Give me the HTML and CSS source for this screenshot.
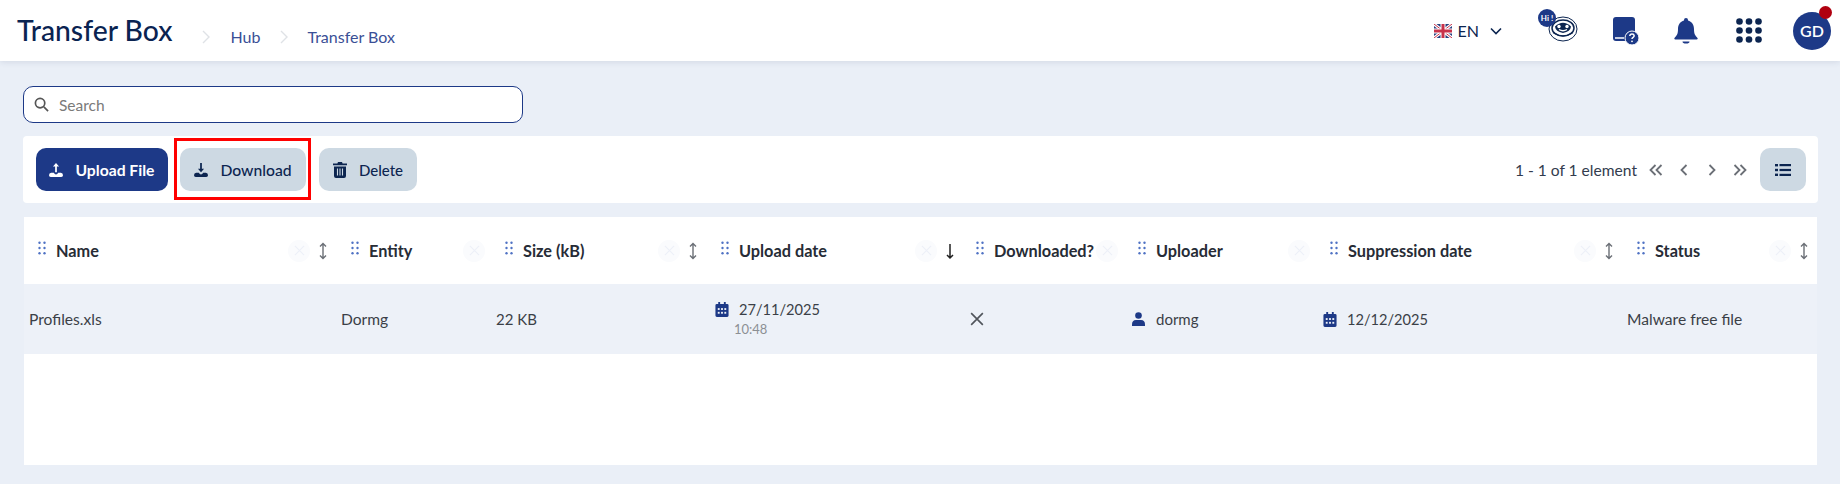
FILE: index.html
```html
<!DOCTYPE html>
<html lang="en">
<head>
<meta charset="utf-8">
<title>Transfer Box</title>
<link rel="stylesheet" href="styles.css">
</head>
<body>
<svg class="defs" width="0" height="0" aria-hidden="true">
  <defs>
    <symbol id="grip" viewBox="0 0 8 14"><g fill="#4f72c4"><circle cx="1.5" cy="1.8" r="1.2"/><circle cx="6.5" cy="1.8" r="1.2"/><circle cx="1.5" cy="7" r="1.2"/><circle cx="6.5" cy="7" r="1.2"/><circle cx="1.5" cy="12.2" r="1.2"/><circle cx="6.5" cy="12.2" r="1.2"/></g></symbol>
    <symbol id="sort" viewBox="0 0 10 18"><path d="M5 1.5v15M2 4.5l3-3 3 3M2 13.5l3 3 3-3" fill="none" stroke="#6b6f76" stroke-width="1.4"/></symbol>
    <symbol id="x" viewBox="0 0 12 12"><path d="M1 1l10 10M11 1L1 11" fill="none" stroke="currentColor" stroke-width="1.2"/></symbol>
    <symbol id="cal" viewBox="0 0 14 16"><path fill="#1d3987" d="M3 0h2v2h4V0h2v2h1.5A1.5 1.5 0 0 1 14 3.5v11a1.5 1.5 0 0 1-1.5 1.5h-11A1.5 1.5 0 0 1 0 14.5v-11A1.500 1.500 0 0 1 1.500 2H3z"/><g fill="#edf1f8"><rect x="2.500" y="6.500" width="2" height="2"/><rect x="6" y="6.500" width="2" height="2"/><rect x="9.500" y="6.500" width="2" height="2"/><rect x="2.500" y="10.500" width="2" height="2"/><rect x="6" y="10.500" width="2" height="2"/><rect x="9.500" y="10.500" width="2" height="2"/></g></symbol>
  </defs>
</svg>

<header class="topbar">
  <h1 class="title">Transfer Box</h1>
  <nav class="crumbs">
    <svg class="crumb-sep" viewBox="0 0 8 14"><path d="M1 1l6 6-6 6" fill="none" stroke="#dfe2e6" stroke-width="1.400"/></svg>
    <span class="crumb crumb-hub">Hub</span>
    <svg class="crumb-sep" viewBox="0 0 8 14"><path d="M1 1l6 6-6 6" fill="none" stroke="#dfe2e6" stroke-width="1.400"/></svg>
    <span class="crumb">Transfer Box</span>
  </nav>
  <div class="top-actions">
    <div class="lang">
      <svg class="flag" viewBox="0 0 18 14"><rect width="18" height="14" rx="2" fill="#27407f"/><path d="M0 0l18 14M18 0L0 14" stroke="#fff" stroke-width="3"/><path d="M0 0l18 14M18 0L0 14" stroke="#c8324a" stroke-width="1"/><path d="M9 0v14M0 7h18" stroke="#fff" stroke-width="5"/><path d="M9 0v14M0 7h18" stroke="#c8324a" stroke-width="3"/></svg>
      <span class="lang-code">EN</span>
      <svg class="lang-chev" viewBox="0 0 12 8"><path d="M1 1.500l5 5 5-5" fill="none" stroke="#0c2550" stroke-width="1.600"/></svg>
    </div>
    <div class="robot">
      <svg class="robot-face" viewBox="0 0 30 26"><g fill="none" stroke="#0c2550"><ellipse cx="15" cy="13" rx="14" ry="12" stroke-width="1"/><ellipse cx="15" cy="12" rx="11" ry="8" stroke-width="1.500"/></g><path d="M7 10.500Q15 3 23 10.500q-.5 5-8 6.500-7.500-1.500-8-6.500z" fill="#0c2550"/><circle cx="11" cy="10.500" r="1.700" fill="#fff"/><circle cx="19" cy="10.500" r="1.700" fill="#fff"/><path d="M11 13.500q4 2.500 8 0" stroke="#fff" stroke-width="1.300" fill="none"/><path d="M5 16.500q10 7 20 0" stroke="#0c2550" stroke-width="1.200" fill="none"/></svg>
      <span class="robot-hi">Hi !</span>
    </div>
    <svg class="help" viewBox="0 0 26 28"><path fill="#1d3987" d="M3 0h16a3 3 0 0 1 3 3v21H3a3 3 0 0 1-3-3V3a3 3 0 0 1 3-3z"/><path d="M2 21h9" stroke="#fff" stroke-width="1.500"/><circle cx="19" cy="21" r="7" fill="#1d3987" stroke="#fff" stroke-width="1"/><path d="M16.800 19q.2-2 2.200-2t2.200 1.800c0 1.500-2.200 1.500-2.200 3.200" fill="none" stroke="#fff" stroke-width="1.500"/><circle cx="19" cy="24.300" r=".9" fill="#fff"/></svg>
    <svg class="bell" viewBox="0 0 24 26"><path fill="#1d3987" d="M12 0a2 2 0 0 1 2 2v.6c3.800 1 6 4.400 6 8.400 0 5 1.200 6.500 3.500 9 .4.500.2 1.500-.8 1.500H1.300c-1 0-1.200-1-.8-1.500C2.800 17.500 4 16 4 11c0-4 2.200-7.400 6-8.400V2a2 2 0 0 1 2-2z"/><path fill="#1d3987" d="M8.500 23.500h7a3.500 2 0 0 1-7 0z"/></svg>
    <svg class="apps" viewBox="0 0 26 25"><g fill="#0c2550"><circle cx="3.500" cy="3.500" r="3.300"/><circle cx="13" cy="3.500" r="3.300"/><circle cx="22.500" cy="3.500" r="3.300"/><circle cx="3.500" cy="12.500" r="3.300"/><circle cx="13" cy="12.500" r="3.300"/><circle cx="22.500" cy="12.500" r="3.300"/><circle cx="3.500" cy="21.500" r="3.300"/><circle cx="13" cy="21.500" r="3.300"/><circle cx="22.500" cy="21.500" r="3.300"/></g></svg>
    <div class="avatar">GD<span class="avatar-dot"></span></div>
  </div>
</header>

<main class="content">
  <label class="search">
    <svg class="search-icon" viewBox="0 0 16 16"><circle cx="6.500" cy="6.500" r="5" fill="none" stroke="#555" stroke-width="1.800"/><path d="M10.500 10.500l4.500 4.500" stroke="#555" stroke-width="1.800"/></svg>
    <input class="search-input" type="text" placeholder="Search">
  </label>

  <section class="toolbar">
    <button class="btn btn-primary btn-upload">
      <svg class="btn-icon" viewBox="0 0 16 16"><path fill="#fff" d="M8 0l3.500 4H9v6.500H7V4H4.500z"/><path fill="#fff" d="M0 14q0-3 2.500-3H5.500q1 2 2.500 2t2.500-2h3q2.500 0 2.500 3 0 2-2 2H2q-2 0-2-2z"/></svg>
      Upload File
    </button>
    <button class="btn btn-marked">
      <svg class="btn-icon" viewBox="0 0 16 16"><path fill="#0c2550" d="M7 0h2v6.500h2.500L8 10.500 4.500 6.500H7z"/><path fill="#0c2550" d="M0 14q0-3 2.500-3H5.500q1 2 2.500 2t2.500-2h3q2.500 0 2.500 3 0 2-2 2H2q-2 0-2-2z"/></svg>
      Download
    </button>
    <button class="btn btn-delete">
      <svg class="btn-icon btn-icon-trash" viewBox="0 0 14 16"><path fill="#0c2550" d="M5 0h4l.6 1.500H14v1.800H0V1.500h4.400zM1 4.500h12V14a2 2 0 0 1-2 2H3a2 2 0 0 1-2-2z"/><path d="M4.500 6.500v7M7 6.500v7M9.500 6.500v7" stroke="#cdd9e3" stroke-width="1.100"/></svg>
      Delete
    </button>
    <div class="pager">
      <span class="pager-text">1 - 1 of 1 element</span>
      <div class="pager-icons">
        <svg viewBox="0 0 14 12"><path d="M6.500 1l-5 5 5 5M12.500 1l-5 5 5 5" fill="none" stroke="#6b6f76" stroke-width="1.800"/></svg>
        <svg viewBox="0 0 14 12"><path d="M9.500 1l-5 5 5 5" fill="none" stroke="#6b6f76" stroke-width="1.800"/></svg>
        <svg viewBox="0 0 14 12"><path d="M4.500 1l5 5-5 5" fill="none" stroke="#6b6f76" stroke-width="1.800"/></svg>
        <svg viewBox="0 0 14 12"><path d="M1.500 1l5 5-5 5M7.500 1l5 5-5 5" fill="none" stroke="#6b6f76" stroke-width="1.800"/></svg>
      </div>
      <button class="btn-view">
        <svg viewBox="0 0 16 12"><g fill="#0c2550"><rect x="0" y="0" width="3" height="2.400"/><rect x="0" y="4.800" width="3" height="2.400"/><rect x="0" y="9.600" width="3" height="2.400"/><rect x="4.500" y="0" width="11.500" height="2.200"/><rect x="4.500" y="4.900" width="11.500" height="2.200"/><rect x="4.500" y="9.800" width="11.500" height="2.200"/></g></svg>
      </button>
    </div>
  </section>

  <section class="table">
    <div class="grid head">
      <div class="th"><svg class="grip"><use href="#grip"/></svg><span class="th-label">Name</span><span class="clear"><svg><use href="#x"/></svg></span><svg class="sort"><use href="#sort"/></svg></div>
      <div class="th no-sort"><svg class="grip"><use href="#grip"/></svg><span class="th-label">Entity</span><span class="clear"><svg><use href="#x"/></svg></span></div>
      <div class="th"><svg class="grip"><use href="#grip"/></svg><span class="th-label">Size (kB)</span><span class="clear"><svg><use href="#x"/></svg></span><svg class="sort"><use href="#sort"/></svg></div>
      <div class="th"><svg class="grip"><use href="#grip"/></svg><span class="th-label">Upload date</span><span class="clear"><svg><use href="#x"/></svg></span><svg class="sort sort-active" viewBox="0 0 10 18"><path d="M5 2v14M2 13l3 3 3-3" fill="none" stroke="#222" stroke-width="1.500"/></svg></div>
      <div class="th no-sort"><svg class="grip"><use href="#grip"/></svg><span class="th-label">Downloaded?</span><span class="clear"><svg><use href="#x"/></svg></span></div>
      <div class="th no-sort"><svg class="grip"><use href="#grip"/></svg><span class="th-label">Uploader</span><span class="clear"><svg><use href="#x"/></svg></span></div>
      <div class="th"><svg class="grip"><use href="#grip"/></svg><span class="th-label">Suppression date</span><span class="clear"><svg><use href="#x"/></svg></span><svg class="sort"><use href="#sort"/></svg></div>
      <div class="th"><svg class="grip"><use href="#grip"/></svg><span class="th-label">Status</span><span class="clear"><svg><use href="#x"/></svg></span><svg class="sort"><use href="#sort"/></svg></div>
    </div>
    <div class="grid row">
      <div class="td">Profiles.xls</div>
      <div class="td">Dormg</div>
      <div class="td td-size">22 KB</div>
      <div class="td td-date">
        <div class="date-line"><svg class="cal"><use href="#cal"/></svg><span>27/11/2025</span></div>
        <div class="time">10:48</div>
      </div>
      <div class="td td-flag"><svg class="no-icon" viewBox="0 0 12 12"><path d="M1 1l10 10M11 1L1 11" fill="none" stroke="#50545b" stroke-width="1.400"/></svg></div>
      <div class="td td-user">
        <svg class="user" viewBox="0 0 13 14"><circle cx="6.500" cy="3.500" r="3.300" fill="#1d3987"/><path fill="#1d3987" d="M0 14v-1.500Q0 8 4 8h5q4 0 4 4.500V14z"/></svg>
        <span>dormg</span>
      </div>
      <div class="td td-supp"><svg class="cal"><use href="#cal"/></svg><span>12/12/2025</span></div>
      <div class="td">Malware free file</div>
    </div>
  </section>
</main>
</body>
</html>
```

FILE: styles.css
```css
* { box-sizing: border-box; }
html, body { margin: 0; height: 484px; overflow: hidden; }
body {
  background: #eaeff7;
  font-family: "Lato", "Open Sans", sans-serif;
  color: #0c2550;
}
.defs { display: block; height: 0; }

/* top bar */
.topbar {
  height: 61px;
  background: #fff;
  box-shadow: 0 1px 6px rgba(30, 50, 90, .12);
  display: flex;
  align-items: center;
  padding-left: 17px;
}
.title { margin: 0 0 2px; font-size: 28.300px; font-weight: 500; color: #0a2351; white-space: nowrap; }
.crumbs { display: flex; align-items: center; margin: 12px 0 0 30px; color: #3a4f96; font-size: 16px; }
.crumb-sep { width: 8px; height: 14px; }
.crumb-hub { margin: 0 20px 0 20px; }
.crumb-sep + .crumb:last-child { margin-left: 19px; }
.top-actions { margin-left: auto; display: flex; align-items: center; padding-right: 9px; }
.lang { display: flex; align-items: center; }
.flag { width: 18px; height: 14px; }
.lang-code { margin-left: 6px; font-size: 16px; }
.lang-chev { width: 12px; height: 8px; margin-left: 11px; }
.robot { position: relative; width: 30px; height: 26px; margin: 0 0 4px 46px; }
.robot-face { width: 30px; height: 26px; display: block; }
.robot-hi {
  position: absolute; left: -10px; top: -7px;
  width: 18px; height: 18px; border-radius: 50%;
  background: #1d3987; color: #fff;
  font-size: 8px; font-weight: 700;
  display: flex; align-items: center; justify-content: center;
}
.help { width: 26px; height: 28px; margin-left: 35px; }
.bell { width: 24px; height: 26px; margin-left: 35px; }
.apps { width: 26px; height: 25px; margin-left: 38px; }
.avatar {
  position: relative;
  width: 38px; height: 38px; margin-left: 31px; border-radius: 50%;
  background: #1d3987; color: #fff; font-size: 16px; font-weight: 600;
  display: flex; align-items: center; justify-content: center;
}
.avatar-dot {
  position: absolute; right: -1px; top: -6px;
  width: 13px; height: 13px; border-radius: 50%; background: #b00010;
}

/* content */
.content { padding: 25px 22px 0 23px; }
.search {
  width: 500px; height: 37px;
  display: flex; align-items: center;
  background: #fff;
  border: 1px solid #1d3987; border-radius: 10px;
  padding-left: 10px;
}
.search-icon { width: 15px; height: 15px; flex: none; }
.search-input {
  flex: 1; min-width: 0; border: 0; outline: 0; background: none; padding: 0; margin-left: 10px;
  font: 15.500px "Lato", sans-serif; color: #333;
}
.search-input::placeholder { color: #7a7a7a; opacity: 1; }

.toolbar {
  margin-top: 13px;
  height: 67px;
  background: #fff;
  border-radius: 4px;
  display: flex; align-items: center;
  padding: 0 12px 0 13px;
}
.btn {
  height: 43px; border: 0; border-radius: 10px;
  display: flex; align-items: center; justify-content: center;
  background: #cdd9e3; color: #0c2550;
  font: 500 15.700px "Lato", sans-serif;
  white-space: nowrap;
  padding: 0;
  position: relative;
}
.btn-icon { width: 14px; height: 14px; margin-right: 12px; }
.btn-icon-trash { height: 16px; }
.btn-primary { background: #1d3987; color: #fff; font-weight: 700; }
.btn-upload { width: 132px; }
.btn-marked { width: 126px; margin-left: 12px; }
.btn-delete { width: 98px; margin-left: 13px; font-size: 15px; }
.btn-marked::after {
  content: ""; position: absolute;
  left: -6px; right: -5px; top: -10px; bottom: -9px;
  border: 3px solid #f00;
}
.pager { margin-left: auto; display: flex; align-items: center; }
.pager-text { font-size: 15.600px; color: #333c4e; }
.pager-icons { display: flex; margin-left: 12px; gap: 14px; }
.pager-icons svg { width: 14px; height: 12px; display: block; }
.btn-view {
  width: 46px; height: 43px; margin-left: 13px;
  background: #cdd9e3; border: 0; border-radius: 10px;
  display: flex; align-items: center; justify-content: center; padding: 0;
}
.btn-view svg { width: 16px; height: 12px; }

/* table */
.table { margin: 14px 1px 0 1px; height: 248px; background: #fff; }
.grid {
  display: grid;
  grid-template-columns: 312px 154px 216px 255px 162px 192px 307px 195px;
}
.head { height: 67px; }
.row { height: 70px; background: #edf1f8; font-size: 15.600px; color: #3b3f47; }
.th {
  display: flex; align-items: center; min-width: 0;
  padding: 0 8px 0 14px;
}
.th:not(:first-child) { padding-left: 15px; }
.th.no-sort { padding-right: 5px; }
.grip { width: 8px; height: 14px; flex: none; margin-bottom: 6px; }
.th-label { margin-left: 10px; font-size: 16.300px; font-weight: 700; color: #272c36; white-space: nowrap; }
.clear {
  margin-left: auto; width: 22px; height: 22px; border-radius: 50%;
  background: #fafbfd; color: #edf0f8;
  display: flex; align-items: center; justify-content: center; flex: none;
}
.clear svg { width: 11px; height: 11px; }
.sort { width: 10px; height: 18px; margin-left: 8px; flex: none; }
.sort-active { margin-right: -2px; }

.td { display: flex; align-items: center; padding-left: 5px; min-width: 0; }
.td-size { padding-left: 6px; font-size: 15px; }
.td-date { flex-direction: column; align-items: flex-start; justify-content: center; padding-left: 9px; font-size: 14.600px; }
.date-line { display: flex; align-items: center; }
.date-line span { margin-left: 10px; }
.cal { width: 14px; height: 15px; flex: none; }
.time { margin: 3px 0 0 19px; font-size: 13px; color: #8c8f94; }
.td-flag { padding-left: 9px; }
.no-icon { width: 14px; height: 14px; }
.td-user { padding-left: 9px; font-size: 15px; }
.user { width: 13px; height: 14px; }
.td-user span { margin-left: 11px; }
.td-supp { padding-left: 8px; font-size: 14.600px; }
.td-supp span { margin-left: 10px; }
```
